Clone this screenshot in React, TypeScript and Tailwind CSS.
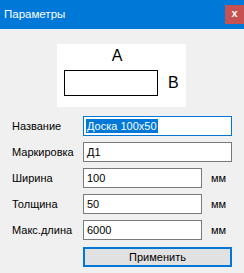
export default function App() {
  const rows = [
    { label: "Название", value: "Доска 100x50", wide: true, focus: true },
    { label: "Маркировка", value: "Д1", wide: true },
    { label: "Ширина", value: "100", unit: "мм" },
    { label: "Толщина", value: "50", unit: "мм" },
    { label: "Макс.длина", value: "6000", unit: "мм" },
  ]

  return (
    <div className="w-[244px] h-[273px] bg-[#f0f0f0] flex flex-col text-[11px] text-black font-['Liberation_Sans',Arial,sans-serif]">
      <div className="h-[29px] bg-[#0078d7] flex items-start justify-between">
        <span className="pl-[4px] pt-[6px] text-white text-[11.5px] leading-[16px]">Параметры</span>
        <div className="mt-[5px] w-[19px] h-[19px] bg-[#c75050] flex items-center justify-center text-white text-[11px] font-bold leading-none pb-[2px]">
          x
        </div>
      </div>

      <div className="mt-[15px] ml-[57px] w-[129px] h-[63px] bg-white flex flex-col">
        <div className="h-[26px] flex justify-center pt-[4px] text-[16px] leading-[16px] pr-[9px]">A</div>
        <div className="flex items-center">
          <div className="ml-[7px] w-[94px] h-[26px] border border-black" />
          <span className="ml-[10px] text-[16px] leading-[16px]">B</span>
        </div>
      </div>

      <div className="mt-[9px] flex flex-col gap-[6px]">
        {rows.map((r) => (
          <div key={r.label} className="h-[20px] flex items-center">
            <span className="pl-[12px] w-[83px] shrink-0">{r.label}</span>
            <div
              className={
                "h-[20px] bg-white flex items-center pl-[2px] border " +
                (r.focus ? "border-[#0078d7] " : "border-[#7a7a7a] ") +
                (r.wide ? "w-[149px]" : "w-[119px]")
              }
            >
              {r.focus ? (
                <span className="bg-[#0078d7] text-white leading-[14px] px-[1px]">{r.value}</span>
              ) : (
                <span className="leading-[14px] px-[1px]">{r.value}</span>
              )}
            </div>
            {r.unit && <span className="ml-[9px]">{r.unit}</span>}
          </div>
        ))}
      </div>

      <div className="mt-[7px] ml-[83px] w-[149px] h-[20px] bg-[#e1e1e1] border-2 border-[#0078d7] flex items-center justify-center">
        Применить
      </div>
    </div>
  )
}
